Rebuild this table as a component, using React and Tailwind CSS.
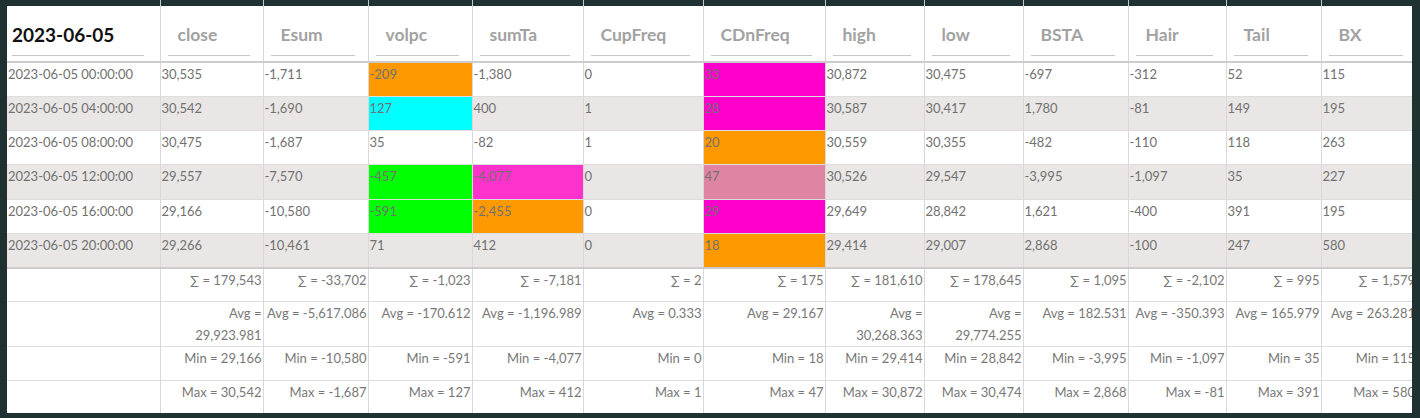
import React from "react";

const cols = [
  { key: "date", label: "2023-06-05", w: "w-[153px]" },
  { key: "close", label: "close", w: "w-[103px]" },
  { key: "esum", label: "Esum", w: "w-[105px]" },
  { key: "volpc", label: "volpc", w: "w-[104px]" },
  { key: "sumTa", label: "sumTa", w: "w-[111px]" },
  { key: "cup", label: "CupFreq", w: "w-[120px]" },
  { key: "cdn", label: "CDnFreq", w: "w-[122px]" },
  { key: "high", label: "high", w: "w-[99px]" },
  { key: "low", label: "low", w: "w-[99px]" },
  { key: "bsta", label: "BSTA", w: "w-[105px]" },
  { key: "hair", label: "Hair", w: "w-[98px]" },
  { key: "tail", label: "Tail", w: "w-[95px]" },
  { key: "bx", label: "BX", w: "w-[95px]" },
];

const orange = "bg-[#ff9900]";
const cyan = "bg-[#00ffff]";
const magenta = "bg-[#ff00cc]";
const green = "bg-[#00ff00]";
const pink = "bg-[#ff33cc]";
const dusty = "bg-[#e084a4]";

// each cell: [text, colour class or null]
const rows = [
  ["2023-06-05 00:00:00", "30,535", "-1,711", ["-209", orange], "-1,380", "0", ["33", magenta], "30,872", "30,475", "-697", "-312", "52", "115"],
  ["2023-06-05 04:00:00", "30,542", "-1,690", ["127", cyan], "400", "1", ["28", magenta], "30,587", "30,417", "1,780", "-81", "149", "195"],
  ["2023-06-05 08:00:00", "30,475", "-1,687", "35", "-82", "1", ["20", orange], "30,559", "30,355", "-482", "-110", "118", "263"],
  ["2023-06-05 12:00:00", "29,557", "-7,570", ["-457", green], ["-4,077", pink], "0", ["47", dusty], "30,526", "29,547", "-3,995", "-1,097", "35", "227"],
  ["2023-06-05 16:00:00", "29,166", "-10,580", ["-591", green], ["-2,455", orange], "0", ["29", magenta], "29,649", "28,842", "1,621", "-400", "391", "195"],
  ["2023-06-05 20:00:00", "29,266", "-10,461", "71", "412", "0", ["18", orange], "29,414", "29,007", "2,868", "-100", "247", "580"],
];

const sums = ["179,543", "-33,702", "-1,023", "-7,181", "2", "175", "181,610", "178,645", "1,095", "-2,102", "995", "1,579"];
const avgs = ["29,923.981", "-5,617.086", "-170.612", "-1,196.989", "0.333", "29.167", "30,268.363", "29,774.255", "182.531", "-350.393", "165.979", "263.281"];
const mins = ["29,166", "-10,580", "-591", "-4,077", "0", "18", "29,414", "28,842", "-3,995", "-1,097", "35", "115"];
const maxs = ["30,542", "-1,687", "127", "412", "1", "47", "30,872", "30,474", "2,868", "-81", "391", "580"];

// the avg values that wrap onto a second line in these narrow columns
const wrapAvg = [0, 6, 7];

const App = () => {
  return (
    <div className="w-[1420px] h-[418px] bg-[#1f3131] pl-[7px] overflow-hidden font-['Lato',sans-serif]">
      <div className="w-[1405px] h-[413px] overflow-hidden">
        <table className="table-fixed border-collapse w-[1409px]">
          <colgroup>
            {cols.map((c) => (
              <col key={c.key} className={c.w} />
            ))}
          </colgroup>
          <thead>
            {/* strip of the table scrolled up under the frame */}
            <tr>
              {cols.map((c, i) => (
                <td
                  key={c.key}
                  className={`h-[6px] p-0 bg-[#1f3131] border-[#c9c9c9] ${i === 0 ? "" : "border-l"}`}
                />
              ))}
            </tr>
            <tr className="bg-white">
              {cols.map((c, i) => (
                <th
                  key={c.key}
                  className={`h-[56px] p-0 pb-[5px] align-bottom text-left font-normal border-b-2 border-b-[#cccccc] ${
                    i === 0 ? "" : "border-l border-l-[#d6d6d6]"
                  }`}
                >
                  {i === 0 ? (
                    <div className="ml-[5px] mr-[16px] h-[40px] flex items-center border-b border-[#c8c8c8] text-[19px] font-bold text-[#111111]">
                      {c.label}
                    </div>
                  ) : (
                    <div className="ml-[7px] mr-[13px] h-[40px] flex items-center pl-[10px] border-b border-[#c8c8c8] text-[17.5px] font-bold text-[#a2a2a2] whitespace-nowrap">
                      {c.label}
                    </div>
                  )}
                </th>
              ))}
            </tr>
          </thead>
          <tbody>
            {rows.map((row, r) => (
              <tr key={r} className={r % 2 === 1 ? "bg-[#e9e6e5]" : "bg-white"}>
                {row.map((cell, i) => {
                  const text = Array.isArray(cell) ? cell[0] : cell;
                  const bg = Array.isArray(cell) ? cell[1] : "";
                  return (
                    <td
                      key={i}
                      className={`h-[34.3px] p-0 pl-[1px] align-top text-[13px] leading-[22px] text-[#717171] whitespace-nowrap border-b border-b-[#dddddd] ${bg} ${
                        i === 0 ? "pl-0" : "border-l border-l-[#d9d9d9]"
                      }`}
                    >
                      {text}
                    </td>
                  );
                })}
              </tr>
            ))}
          </tbody>
          <tfoot className="bg-white">
            {[
              { label: "∑ = ", vals: sums },
              { label: "Avg = ", vals: avgs, avg: true },
              { label: "Min = ", vals: mins },
              { label: "Max = ", vals: maxs },
            ].map((f, r) => (
              <tr key={r}>
                <td
                  className={`h-[34px] p-0 border-b border-b-[#dddddd] ${r === 0 ? "border-t-2 border-t-[#cccccc]" : ""}`}
                />
                {f.vals.map((v, i) => (
                  <td
                    key={i}
                    className={`h-[34px] p-0 pr-[1px] align-top text-right text-[13px] leading-[22px] text-[#787878] whitespace-nowrap border-l border-l-[#d9d9d9] border-b border-b-[#dddddd] ${
                      r === 0 ? "border-t-2 border-t-[#cccccc]" : ""
                    }`}
                  >
                    {f.avg && wrapAvg.includes(i) ? (
                      <>
                        <div>Avg =</div>
                        <div>{v}</div>
                      </>
                    ) : (
                      f.label + v
                    )}
                  </td>
                ))}
              </tr>
            ))}
          </tfoot>
        </table>
      </div>
    </div>
  );
};

export default App;
